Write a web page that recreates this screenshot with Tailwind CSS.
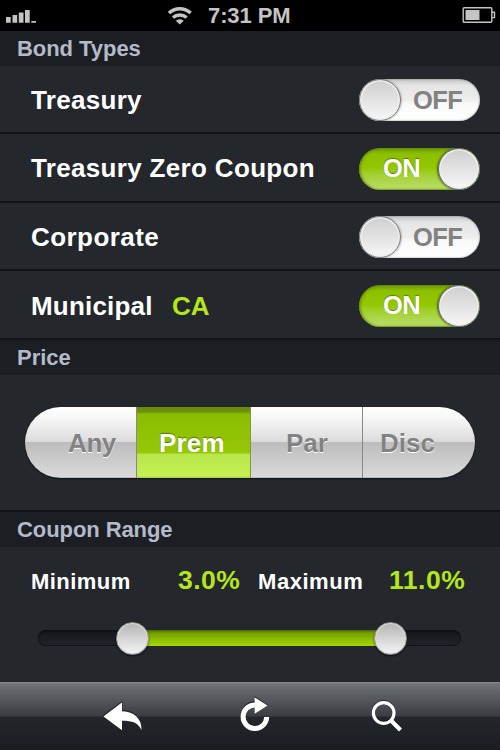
<!DOCTYPE html>
<html lang="en">
<head>
<meta charset="utf-8">
<title>Bond Filters</title>
<script src="https://cdn.jsdelivr.net/npm/@tailwindcss/browser@4"></script>
</head>
<body class="w-[500px] h-[750px] overflow-hidden bg-[#24272c] font-['Liberation_Sans',Arial,sans-serif] font-bold text-white whitespace-nowrap">
<div class="flex flex-col w-[500px] h-[750px]">

<div class="h-[31px] bg-black flex items-start text-[#c4c4c4]">
  <svg class="w-[208px] h-[31px] shrink-0" viewBox="0 0 208 31" fill="#c4c4c4">
    <path d="M6 17h4.700v5.700H6zM12.500 15h4.700v7.700h-4.700zM18.800 12.500h4.700v10.200h-4.700zM25 10h4.700v12.700H25zM31.300 21h4.700v1.700h-4.700z"/>
    <g fill="none" stroke="#c4c4c4" stroke-width="3.400"><path d="M168.900 13.100a15.800 15.800 0 0 1 21.800 0"/><path d="M173 17.600a10 10 0 0 1 13.600 0"/></g>
    <path d="M175.800 20.800a6 6 0 0 1 8 0L179.800 24.600z"/>
  </svg>
  <div class="w-[254px] text-[22px] leading-[31px] tracking-[-0.1px]">7:31 PM</div>
  <svg class="w-[38px] h-[31px] shrink-0" viewBox="0 0 38 31" fill="none">
    <rect x="1.200" y="7.700" width="28.600" height="14.600" rx="1" stroke="#c4c4c4" stroke-width="1.400"/>
    <rect x="3.500" y="10" width="14" height="10" fill="#c4c4c4"/>
    <path d="M30 12.200h2.500v5.400H30" stroke="#c4c4c4" stroke-width="1.400"/>
  </svg>
</div>

<div class="h-[35px] bg-[#1b1e23] pl-[17px] text-[22px] leading-[35px] text-[#b4bac9] tracking-[-0.05px]">Bond Types</div>

<div class="h-[68px] border-b-2 border-[#111317] pl-[31px] pr-5 flex items-center justify-between text-[26px]">
  <span class="tracking-[0.3px] pt-[2px]">Treasury</span>
  <div class="relative top-px w-[121px] h-[42px] rounded-full overflow-hidden bg-[linear-gradient(#c4c4c4_0%,#e5e5e5_15%,#ededed_50%,#fafafa_60%,#fff_100%)] shadow-[inset_0_0_2px_#777] flex items-center">
    <div class="w-[42px] h-[42px] rounded-full border border-[#777] bg-linear-to-b from-[#cfcfcf] to-[#f7f7f7] shadow-[inset_0_0_0_1.500px_#eee,1px_0_2px_#8888]"></div>
    <span class="ml-[12px] text-[25.500px] text-[#828282] tracking-[-0.600px]">OFF</span>
  </div>
</div>
<div class="h-[69px] border-b-2 border-[#111317] pl-[31px] pr-5 flex items-center justify-between text-[26px]">
  <span class="tracking-[0.330px] pt-[2px]">Treasury Zero Coupon</span>
  <div class="relative top-px w-[121px] h-[42px] rounded-full overflow-hidden bg-[linear-gradient(#6f990a_0%,#8cc000_14%,#93c800_48%,#a0cf2c_60%,#badd67_97%,#7da02c_100%)] shadow-[inset_1px_0_3px_#587a08] flex items-center justify-between">
    <span class="ml-[24px] text-[25.500px] tracking-[-0.700px] [text-shadow:0_-1px_1px_#5a7a08]">ON</span>
    <div class="w-[42px] h-[42px] rounded-full border border-[#667] bg-linear-to-b from-[#cfcfcf] to-[#f7f7f7] shadow-[inset_0_0_0_1.500px_#eee,-1px_0_2px_#4a6608]"></div>
  </div>
</div>
<div class="h-[68px] border-b-2 border-[#111317] pl-[31px] pr-5 flex items-center justify-between text-[26px]">
  <span class="tracking-[0.440px] pt-[2px]">Corporate</span>
  <div class="relative top-px w-[121px] h-[42px] rounded-full overflow-hidden bg-[linear-gradient(#c4c4c4_0%,#e5e5e5_15%,#ededed_50%,#fafafa_60%,#fff_100%)] shadow-[inset_0_0_2px_#777] flex items-center">
    <div class="w-[42px] h-[42px] rounded-full border border-[#777] bg-linear-to-b from-[#cfcfcf] to-[#f7f7f7] shadow-[inset_0_0_0_1.500px_#eee,1px_0_2px_#8888]"></div>
    <span class="ml-[12px] text-[25.500px] text-[#828282] tracking-[-0.600px]">OFF</span>
  </div>
</div>
<div class="h-[69px] border-b-2 border-[#111317] pl-[31px] pr-5 flex items-center text-[26px]">
  <span class="w-[122px] tracking-[0.200px] pt-[3px]">Municipal</span>
  <span class="ml-[19px] pt-[3px] text-[#b5e61a]">CA</span>
  <div class="relative top-px ml-auto w-[121px] h-[42px] rounded-full overflow-hidden bg-[linear-gradient(#6f990a_0%,#8cc000_14%,#93c800_48%,#a0cf2c_60%,#badd67_97%,#7da02c_100%)] shadow-[inset_1px_0_3px_#587a08] flex items-center justify-between">
    <span class="ml-[24px] text-[25.500px] tracking-[-0.700px] [text-shadow:0_-1px_1px_#5a7a08]">ON</span>
    <div class="w-[42px] h-[42px] rounded-full border border-[#667] bg-linear-to-b from-[#cfcfcf] to-[#f7f7f7] shadow-[inset_0_0_0_1.500px_#eee,-1px_0_2px_#4a6608]"></div>
  </div>
</div>

<div class="h-[35px] bg-[#1b1e23] pl-[17px] text-[22px] leading-[35px] text-[#b4bac9]">Price</div>

<div class="h-[137px] border-b-2 border-[#111317] pt-8 pl-[25px]">
  <div class="w-[450px] h-[71px] rounded-full overflow-hidden flex text-[26px] leading-[73px] text-[#828282] [text-shadow:0_1px_0_#fff] bg-[linear-gradient(#fff_0%,#f7f7f7_15%,#dcdcdc_48.500%,#bdbdbd_50%,#d9d9d9_98%,#aaa_100%)] shadow-[0_1px_2px_#0008]">
    <div class="w-[112px] pl-[43px] border-r border-[#888] tracking-[-0.400px]">Any</div>
    <div class="w-[114px] pl-[22px] border-r border-[#7f9c3a] text-white tracking-[0.200px] [text-shadow:0_-1px_1px_#56760b] bg-[linear-gradient(#668b08_0px,#6d940a_5px,#8bbc00_7px,#96c808_46px,#b8e64a_47px,#c3ef52_69px,#a5c850_71px)]">Prem</div>
    <div class="w-[112px] pl-[35px] border-r border-[#888]">Par</div>
    <div class="flex-1 pl-[17px]">Disc</div>
  </div>
</div>

<div class="h-[35px] bg-[#1b1e23] pl-[17px] text-[22px] leading-[35px] text-[#b4bac9] tracking-[-0.080px]">Coupon Range</div>

<div class="h-[135px] flex flex-col">
  <div class="h-[68px] flex items-center pl-[31px] text-[22px]">
    <span class="w-[147px] tracking-[0.450px]">Minimum</span>
    <span class="w-[80px] text-[26.500px] text-[#b5e61a] tracking-[0.500px]">3.0%</span>
    <span class="w-[131px] tracking-[0.550px]">Maximum</span>
    <span class="text-[26.500px] text-[#b5e61a] tracking-[0.550px]">11.0%</span>
  </div>
  <div class="mt-[15px] ml-[38px] w-[423px] h-[16px] rounded-full bg-linear-to-b from-[#15171b] to-[#20232a] shadow-[inset_0_1px_2px_#0a0b0d,inset_0_-1px_0_#15171a] flex items-center">
    <div class="z-10 ml-[77.500px] w-[33px] h-[33px] shrink-0 rounded-full border border-[#999] bg-linear-to-b from-[#b5b5b5] to-[#f5f5f5] shadow-[inset_0_0_0_1px_#ddd,0_1px_2px_#0009]"></div>
    <div class="-mx-2 w-[241.500px] h-4 bg-[linear-gradient(#4b6702_0%,#769f02_20%,#86b602_50%,#a6d900_100%)]"></div>
    <div class="z-10 w-[33px] h-[33px] shrink-0 rounded-full border border-[#999] bg-linear-to-b from-[#b5b5b5] to-[#f5f5f5] shadow-[inset_0_0_0_1px_#ddd,0_1px_2px_#0009]"></div>
  </div>
</div>

<div class="h-[68px] bg-[linear-gradient(#8a8c8f_0px,#707276_2px,#63666a_8px,#3a3d42_34px,#23262b_35px,#1a1d21_68px)]">
  <svg class="w-[500px] h-[68px]" viewBox="0 682 500 68" fill="#fff">
    <g fill="none" stroke="#111" stroke-opacity=".65"><path stroke-width="1" d="M103 715.500 122 701.500V710Q139 711 141.500 727"/><circle cx="383.700" cy="712" r="10.500" stroke-width="3"/><path d="M255 703.500a12 12 0 0 0 0 24" stroke-width="5"/><path d="M254.500 696.500 268 705.500"/></g>
    <path d="M103.500 716.500 122 702.500V711.200C134 711.500 142 718.500 141.500 730C138 722.500 132.500 720.700 122 720.700V730.200z"/>
    <path d="M255 704.900A11.800 11.800 0 1 0 266.700 717" fill="none" stroke="#fff" stroke-width="5"/>
    <path d="M254.700 697.500 267.500 705.600 254.700 713.700z"/>
    <circle cx="383.700" cy="713" r="10.300" fill="none" stroke="#fff" stroke-width="3.200"/>
    <path d="M391.200 720.800 400.500 730" stroke="#fff" stroke-width="4.200"/>
  </svg>
</div>
</div>
</body>
</html>
